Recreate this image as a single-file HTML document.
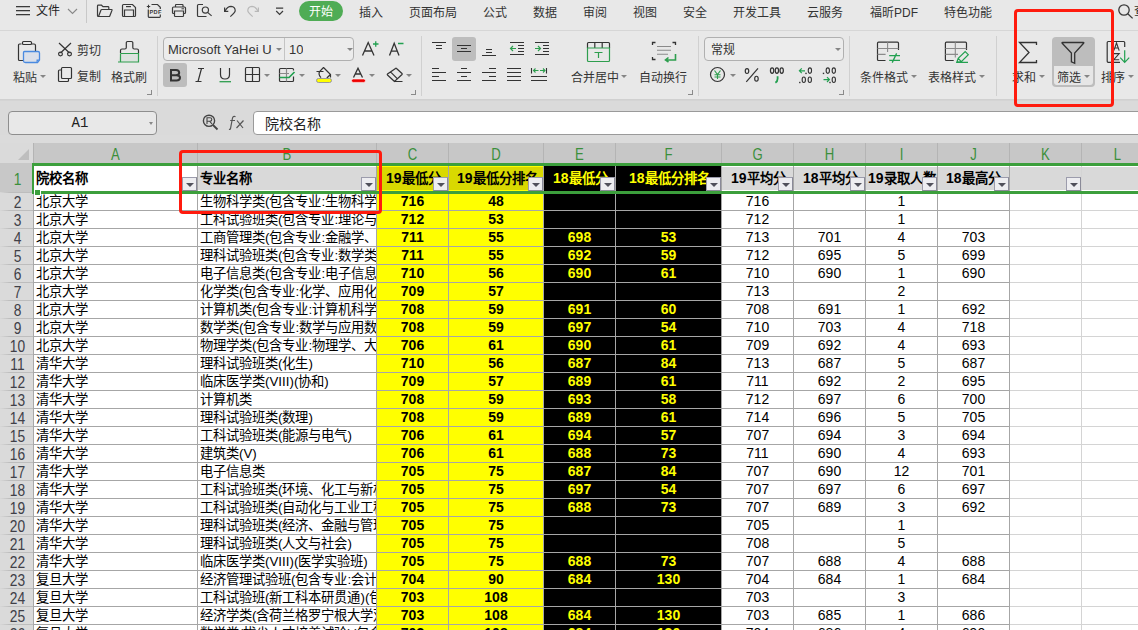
<!DOCTYPE html><html lang="zh-CN"><head><meta charset="utf-8"><style>
*{margin:0;padding:0;box-sizing:border-box}
html,body{width:1138px;height:630px;overflow:hidden;background:#e8e8e8;font-family:"Liberation Sans",sans-serif;color:#222}
.a{position:absolute}
.t{position:absolute;white-space:nowrap;overflow:hidden}
.mt{position:absolute;top:4px;font-size:12px;line-height:16px;color:#333}
.rl{position:absolute;font-size:12px;line-height:14px;color:#333;white-space:nowrap}
.car{position:absolute;width:0;height:0;border-left:3px solid transparent;border-right:3px solid transparent;border-top:3px solid #7a7a7a}
.sep{position:absolute;width:1px;background:#d0d0d0}
.cell{position:absolute;height:18px;font-size:13.33px;line-height:17px;white-space:nowrap;overflow:hidden}
.num{font-size:14px}
.b{font-weight:bold}
.fb{position:absolute;width:15px;height:14px;border:1px solid #9c9cac;border-right-color:#8a8a98;border-bottom-color:#8a8a98;background:#ededf0}
.fb:after{content:"";position:absolute;left:2.5px;top:4.5px;border-left:4px solid transparent;border-right:4px solid transparent;border-top:4.5px solid #50505a}
</style></head><body>
<div class="a" style="left:0;top:0;width:1138px;height:30px;background:#e8e8e8"></div>
<div class="a" style="left:0;top:30px;width:1138px;height:1px;background:#d6d6d6"></div>
<div class="a" style="left:16px;top:6px;width:14px;height:1px;background:#3a3a3a;box-shadow:0 0.5px 0 #888"></div>
<div class="a" style="left:16px;top:10px;width:14px;height:1px;background:#3a3a3a;box-shadow:0 0.5px 0 #888"></div>
<div class="a" style="left:16px;top:14px;width:14px;height:1px;background:#3a3a3a;box-shadow:0 0.5px 0 #888"></div>
<div class="mt" style="left:36px;top:3px;color:#222">文件</div>
<svg class="a" style="left:67px;top:8px" width="11" height="7"><path d="M1 1 L5.5 5.5 L10 1" fill="none" stroke="#888" stroke-width="1.1"/></svg>
<div class="a" style="left:86px;top:0;width:1px;height:23px;background:#c8c8c8"></div>
<svg class="a" style="left:0;top:0" width="300" height="24" fill="none" stroke="#3a3a3a" stroke-width="1.2"><path d="M99.2 16.5 H98.5 Q97.5 16.5 97.5 15.5 V6 Q97.5 5.2 98.3 5.2 H101.5 L103 6.6 H108 Q108.8 6.6 108.8 7.4 V9.5"/><path d="M98.5 16.5 L101 10 Q101.2 9.5 101.8 9.5 H111.5 Q112.2 9.5 112 10.2 L109.8 16 Q109.6 16.5 109 16.5 Z"/><path d="M122.5 5.5 Q122.5 4.5 123.5 4.5 H132.5 L135.5 7.5 V15.5 Q135.5 16.5 134.5 16.5 H123.5 Q122.5 16.5 122.5 15.5 Z"/><path d="M126 6.6 H131"/><path d="M124.5 16.5 V10 H133.5 V16.5"/><path d="M151.5 4.5 H157.5 L160.3 7.3 V9 M160.3 14.5 V16.5 Q160.3 17.3 159.5 17.3 H149 Q148.3 17.3 148.3 16.5 V9.5"/><path d="M146.8 6.5 H150.2 M148.5 4.8 V8.2" stroke-width="1.1"/><text x="149.6" y="14.4" font-family="Liberation Sans" font-weight="bold" font-size="5.6" fill="#3a3a3a" stroke="none" letter-spacing="0.3">PDF</text><path d="M175.5 7 V5.2 Q175.5 4.5 176.2 4.5 H182.3 Q183 4.5 183 5.2 V7"/><path d="M174.5 13.5 H173.5 Q172.5 13.5 172.5 12.5 V8 Q172.5 7 173.5 7 H184.5 Q185.5 7 185.5 8 V12.5 Q185.5 13.5 184.5 13.5 H183.5"/><path d="M174.5 11 H183.5 V15.7 Q183.5 16.5 182.7 16.5 H175.3 Q174.5 16.5 174.5 15.7 Z"/><path d="M181.5 8.8 H184" stroke-width="1"/><path d="M203 4.5 H198.5 Q197.5 4.5 197.5 5.5 V15.5 Q197.5 16.5 198.5 16.5 H206.5"/><circle cx="205.4" cy="10.1" r="3.1"/><path d="M207.6 12.4 L211.6 15.9"/><path d="M224.6 7.5 V11.3 H228.3"/><path d="M225 11 Q227.5 6.3 231 6.3 Q235.2 6.5 235.2 10.8 Q235.2 12.5 230.3 16.6"/><g stroke="#b8b8b8"><path d="M258.4 7.5 V11.3 H254.7"/><path d="M258 11 Q255.5 6.3 252 6.3 Q247.8 6.5 247.8 10.8 Q247.8 12.5 252.7 16.6"/></g><path d="M276 8.2 H283.2 M276.2 11 L279.6 14.4 L283 11" stroke-width="1.2"/></svg>
<div class="a" style="left:299px;top:1px;width:44px;height:20px;border-radius:10px;background:#4fac55"></div>
<div class="mt" style="left:309px;top:4px;color:#fff">开始</div>
<div class="mt" style="left:359px;top:5px">插入</div>
<div class="mt" style="left:409px;top:5px">页面布局</div>
<div class="mt" style="left:483px;top:5px">公式</div>
<div class="mt" style="left:533px;top:5px">数据</div>
<div class="mt" style="left:583px;top:5px">审阅</div>
<div class="mt" style="left:633px;top:5px">视图</div>
<div class="mt" style="left:683px;top:5px">安全</div>
<div class="mt" style="left:733px;top:5px">开发工具</div>
<div class="mt" style="left:807px;top:5px">云服务</div>
<div class="mt" style="left:870px;top:5px">福昕PDF</div>
<div class="mt" style="left:944px;top:5px">特色功能</div>
<svg class="a" style="left:1117px;top:3px" width="18" height="17" fill="none" stroke="#3a3a3a" stroke-width="1.3"><circle cx="7" cy="7" r="5.2"/><path d="M10.8 10.8 L15.6 15.4"/></svg>
<div class="mt" style="left:1134px;top:3px">查</div>
<div class="a" style="left:0;top:31px;width:1138px;height:68px;background:#e8e8e8"></div>
<div class="sep" style="left:157px;top:36px;height:60px"></div>
<div class="sep" style="left:421px;top:36px;height:60px"></div>
<div class="sep" style="left:698px;top:36px;height:60px"></div>
<div class="sep" style="left:849px;top:36px;height:60px"></div>
<div class="sep" style="left:996px;top:36px;height:60px"></div>
<div class="a" style="left:163px;top:37px;width:191px;height:24px;border:1px solid #b0b0b0;border-radius:4px;background:#ececec"></div>
<div class="a" style="left:284px;top:38px;width:1px;height:22px;background:#c4c4c4"></div>
<div class="t" style="left:168px;top:42px;width:105px;font-size:13px;line-height:16px;color:#333">Microsoft YaHei U</div>
<div class="t" style="left:289px;top:42px;font-size:13px;line-height:16px;color:#333">10</div>
<div class="a" style="left:704px;top:37px;width:140px;height:24px;border:1px solid #b0b0b0;border-radius:4px;background:#ececec"></div>
<div class="t" style="left:711px;top:42px;font-size:12px;line-height:16px;color:#333">常规</div>
<div class="a" style="left:163px;top:63px;width:24px;height:24px;border-radius:3px;background:#bdbdbd"></div>
<div class="a" style="left:452px;top:37px;width:24px;height:24px;border-radius:3px;background:#bdbdbd"></div>
<div class="a" style="left:1052px;top:37px;width:43px;height:50px;border-radius:4px;background:#bdbdbd"></div>
<div class="a" style="left:1054px;top:66px;width:39px;height:19px;border-radius:0 0 3px 3px;background:#e6e6e6"></div>
<div class="car" style="left:40px;top:75px;border-left-width:3px;border-right-width:3px;border-top-width:3.5px;border-top-color:#858585"></div>
<div class="car" style="left:276px;top:48px;border-left-width:3px;border-right-width:3px;border-top-width:3.5px;border-top-color:#858585"></div>
<div class="car" style="left:347px;top:48px;border-left-width:3px;border-right-width:3px;border-top-width:3.5px;border-top-color:#858585"></div>
<div class="car" style="left:264px;top:74px;border-left-width:3px;border-right-width:3px;border-top-width:3.5px;border-top-color:#858585"></div>
<div class="car" style="left:299px;top:74px;border-left-width:3px;border-right-width:3px;border-top-width:3.5px;border-top-color:#858585"></div>
<div class="car" style="left:335px;top:74px;border-left-width:3px;border-right-width:3px;border-top-width:3.5px;border-top-color:#858585"></div>
<div class="car" style="left:369px;top:74px;border-left-width:3px;border-right-width:3px;border-top-width:3.5px;border-top-color:#858585"></div>
<div class="car" style="left:406px;top:74px;border-left-width:3px;border-right-width:3px;border-top-width:3.5px;border-top-color:#858585"></div>
<div class="car" style="left:621px;top:75px;border-left-width:3px;border-right-width:3px;border-top-width:3.5px;border-top-color:#858585"></div>
<div class="car" style="left:730px;top:74px;border-left-width:3px;border-right-width:3px;border-top-width:3.5px;border-top-color:#858585"></div>
<div class="car" style="left:835px;top:48px;border-left-width:3px;border-right-width:3px;border-top-width:3.5px;border-top-color:#858585"></div>
<div class="car" style="left:911px;top:75px;border-left-width:3px;border-right-width:3px;border-top-width:3.5px;border-top-color:#858585"></div>
<div class="car" style="left:979px;top:75px;border-left-width:3px;border-right-width:3px;border-top-width:3.5px;border-top-color:#858585"></div>
<div class="car" style="left:1039px;top:75px;border-left-width:3px;border-right-width:3px;border-top-width:3.5px;border-top-color:#858585"></div>
<div class="car" style="left:1084px;top:75px;border-left-width:3px;border-right-width:3px;border-top-width:3.5px;border-top-color:#858585"></div>
<div class="car" style="left:1128px;top:75px;border-left-width:3px;border-right-width:3px;border-top-width:3.5px;border-top-color:#858585"></div>
<div class="a" style="left:147px;top:94px;width:5px;height:1px;background:#8a8a8a"></div><div class="a" style="left:151px;top:90px;width:1px;height:5px;background:#8a8a8a"></div>
<div class="a" style="left:411px;top:94px;width:5px;height:1px;background:#8a8a8a"></div><div class="a" style="left:415px;top:90px;width:1px;height:5px;background:#8a8a8a"></div>
<div class="a" style="left:688px;top:94px;width:5px;height:1px;background:#8a8a8a"></div><div class="a" style="left:692px;top:90px;width:1px;height:5px;background:#8a8a8a"></div>
<div class="a" style="left:839px;top:94px;width:5px;height:1px;background:#8a8a8a"></div><div class="a" style="left:843px;top:90px;width:1px;height:5px;background:#8a8a8a"></div>
<div class="rl" style="left:13px;top:71px;font-size:12px;line-height:14px">粘贴</div>
<div class="rl" style="left:77px;top:44px;font-size:12px;line-height:14px">剪切</div>
<div class="rl" style="left:77px;top:70px;font-size:12px;line-height:14px">复制</div>
<div class="rl" style="left:111px;top:71px;font-size:12px;line-height:14px">格式刷</div>
<div class="rl" style="left:571px;top:71px;font-size:12px;line-height:14px">合并居中</div>
<div class="rl" style="left:639px;top:71px;font-size:12px;line-height:14px">自动换行</div>
<div class="rl" style="left:860px;top:71px;font-size:12px;line-height:14px">条件格式</div>
<div class="rl" style="left:928px;top:71px;font-size:12px;line-height:14px">表格样式</div>
<div class="rl" style="left:1012px;top:71px;font-size:12px;line-height:14px">求和</div>
<div class="rl" style="left:1057px;top:71px;font-size:12px;line-height:14px">筛选</div>
<div class="rl" style="left:1101px;top:71px;font-size:12px;line-height:14px">排序</div>
<svg class="a" style="left:0;top:0" width="1138" height="100"><g fill="none" stroke="#333" stroke-width="1.2"><path d="M21.5 44 H19.5 Q18.5 44 18.5 45 V59.5 Q18.5 60.5 19.5 60.5 H23.5"/><path d="M31.5 44 H34 Q35.5 44 35.5 45.5 V51"/><rect x="22.5" y="41.5" width="9" height="3" rx="1"/><path d="M24.5 51.5 H38 Q39.5 51.5 39.5 53 V60 L37.5 62.5 H25.5 Q23.5 62.5 23.5 61 V52.5 Q23.5 51.5 24.5 51.5 Z" fill="#dbe0ea" stroke="#4a8ae0" stroke-width="1.3"/><path d="M39.5 59.5 L36.5 62.5 V59.5 Z" fill="#4a8ae0" stroke="none"/><path d="M59 43 L69.5 53 M71 43 L60.5 53"/><circle cx="60.5" cy="54" r="1.9"/><circle cx="69.5" cy="54" r="1.9"/><path d="M61.5 70 H59.5 Q58.5 70 58.5 71 V80.5 Q58.5 81.5 59.5 81.5 H67.5 Q68.5 81.5 68.5 80.5 V79"/><rect x="61.5" y="67.5" width="10" height="11" rx="1"/><path d="M120.5 53 V50.5 Q120.5 49 122 49 H124.8 Q126.3 49 126.3 47.5 V42.5 Q126.3 41.5 127.5 41.5 H131.5 Q132.8 41.5 132.8 42.5 V47.5 Q132.8 49 134.3 49 H137 Q138.5 49 138.5 50.5 V53"/><path d="M120.5 53.5 H138.5 V62 H118" fill="#dde3df" stroke="#2e9e4e"/><path d="M120.5 53.5 V62" stroke="#2e9e4e"/><path d="M171 70 H176 Q179.2 70 179.2 72.8 Q179.2 75.2 176 75.2 H171 Z M171 75.2 H176.5 Q180 75.2 180 77.8 Q180 80.5 176.5 80.5 H171 Z" stroke-width="2"/><path d="M198 68.5 H204 M195.5 81.5 H201.5 M201.5 68.5 L198 81.5" stroke-width="1.2"/><path d="M220.5 68 V74.5 Q220.5 79 225 79 Q229.5 79 229.5 74.5 V68"/><path d="M219.5 81.7 H231" stroke="#2e9e4e" stroke-width="1.3"/><rect x="245.5" y="67.5" width="14" height="14" rx="1"/><path d="M252.5 67.5 V81.5 M245.5 74.5 H259.5"/><path d="M293.5 70.5 V69.5 Q293.5 68.5 292.5 68.5 H280.5 Q279.5 68.5 279.5 69.5 V80.5 Q279.5 81.5 280.5 81.5 H292.5 Q293.5 81.5 293.5 80.5 V76.5"/><path d="M286.5 68.5 V81.5 M279.5 73.5 H289" stroke="#8a8a8a"/><path d="M279.5 77.5 H289 L294.5 72" stroke="#22a050" stroke-width="1.7"/><path d="M316.5 71.5 H323.5 M323.5 67.5 L330.5 74.5 V77.5 M330.2 74.8 L326.8 78 M323.5 67.5 L319.8 71.3 Q317.8 74 321 77.6" stroke-width="1.2"/><rect x="316.5" y="78.5" width="15" height="4" rx="2" fill="#ffff00" stroke="#9090a0" stroke-width="0.9"/><path d="M353.5 77.5 L358 68.3 L362.5 77.5 M355.3 74 H360.7" stroke-width="1.3"/><rect x="351.5" y="79" width="14" height="3.4" rx="1.7" fill="#ee0000" stroke="#fff" stroke-width="0.6"/><path d="M394.5 81.5 L387.5 75 Q387 74.5 387.5 74 L395.5 68.5 Q396 68 396.5 68.5 L402 73.5 Q402.5 74 402 74.5 Z M390.5 71.8 L397 78.3 M394.5 81.5 H402.5" stroke-width="1.2"/><path d="M362.5 55.5 L368.2 42.5 L374 55.5 M364.6 51 H372" stroke-width="1.3"/><path d="M389.5 55.5 L394.2 43.3 L399 55.5 M391.3 51.2 H397.3" stroke-width="1.3"/><path d="M373 44 H378.5 M375.75 41.2 V46.8 M398 43.5 H403.5" stroke="#22a050" stroke-width="1.3"/><path d="M432 42.5 H446 M436 45.5 H442 M436 48.5 H442" stroke-width="1.1"/><path d="M457 45.5 H471 M461 48.5 H467 M457 51.5 H471" stroke-width="1.1"/><path d="M486 49.5 H492 M486 52.5 H492 M482 55.5 H496" stroke-width="1.1"/><path d="M510 42.5 H524 M518 45.5 H524 M518 48.5 H524 M518 51.5 H524 M510 54.5 H524" stroke-width="1.1"/><path d="M510.5 48.5 H516 M513 46 L510.5 48.5 L513 51" stroke="#2e9e4e" stroke-width="1.2"/><path d="M535 42.5 H549 M543 45.5 H549 M543 48.5 H549 M543 51.5 H549 M535 54.5 H549" stroke-width="1.1"/><path d="M535 48.5 H540.5 M538 46 L540.5 48.5 L538 51" stroke="#2e9e4e" stroke-width="1.2"/><path d="M432 68.5 H439 M432 72.5 H446 M432 76.5 H439 M432 80.5 H446" stroke-width="1.1"/><path d="M461 68.5 H467 M457 72.5 H471 M461 76.5 H467 M457 80.5 H471" stroke-width="1.1"/><path d="M489 68.5 H496 M482 72.5 H496 M489 76.5 H496 M482 80.5 H496" stroke-width="1.1"/><path d="M507 68.5 H521 M507 72.5 H521 M507 76.5 H521 M507 80.5 H521" stroke-width="1.1"/><path d="M531.5 68 V73.5 M546.5 68 V73.5 M531 76.5 H547 M531 80.5 H547" stroke-width="1.1"/><path d="M533.5 70.5 H538.5 M535.5 68.5 L533.5 70.5 L535.5 72.5 M540 70.5 H545 M543 68.5 L545 70.5 L543 72.5" stroke="#2e9e4e" stroke-width="1.1"/><path d="M587.5 48 V43.5 Q587.5 42.5 588.5 42.5 H608.5 Q609.5 42.5 609.5 43.5 V48 M594.8 42.5 V48 M602.2 42.5 V48"/><path d="M587.5 48 H609.5 V60.5 Q609.5 61.5 608.5 61.5 H588.5 Q587.5 61.5 587.5 60.5 Z M594.5 52.5 H602.5 M598.5 52.5 V58" stroke="#2e9e4e"/><path d="M652.5 45 V42.5 H655.5 M672.5 42.5 H675.5 V45 M652.5 57 V59.5 H655.5" stroke-width="1.3"/><path d="M657 46.5 H671 M657 50.3 H671 M657 54.2 H668" stroke="#8a8a8a" stroke-width="1.1"/><path d="M675.5 54 V60 H666 M668.5 57.5 L665.5 60 L668.5 62" stroke="#2e9e4e" stroke-width="1.6"/><circle cx="717.5" cy="74.5" r="7"/><path d="M714.5 70.5 L717.5 74.5 L720.5 70.5 M717.5 74.5 V79 M714.5 74.8 H720.5 M714.5 77 H720.5" stroke="#2e9e4e" stroke-width="1.1"/></g><g fill="none" stroke="#333" stroke-width="1.2"><ellipse cx="747" cy="71.05" rx="1.75" ry="2.45"/><ellipse cx="756.45" cy="78.7" rx="1.75" ry="2.45"/><path d="M758 68.3 L746.3 81.8"/><ellipse cx="772.1" cy="70.6" rx="1.65" ry="2.75" stroke-width="1.25"/><ellipse cx="776.9" cy="70.6" rx="1.65" ry="2.75" stroke-width="1.25"/><ellipse cx="781.7" cy="70.6" rx="1.65" ry="2.75" stroke-width="1.25"/><ellipse cx="809.9" cy="70.6" rx="1.65" ry="2.75" stroke-width="1.1"/><ellipse cx="803.8" cy="79.7" rx="1.65" ry="2.75" stroke-width="1.1"/><ellipse cx="809.8" cy="79.7" rx="1.65" ry="2.75" stroke-width="1.1"/><ellipse cx="827.8" cy="70.6" rx="1.65" ry="2.75" stroke-width="1.1"/><ellipse cx="833.8" cy="70.6" rx="1.65" ry="2.75" stroke-width="1.1"/><ellipse cx="833.8" cy="79.7" rx="1.65" ry="2.75" stroke-width="1.1"/></g><rect x="805.3" y="72.7" width="1.4" height="1.4" fill="#333"/><rect x="799.0999999999999" y="81.8" width="1.4" height="1.4" fill="#333"/><rect x="822.8" y="72.7" width="1.4" height="1.4" fill="#333"/><rect x="829.3" y="81.8" width="1.4" height="1.4" fill="#333"/><path d="M777.6 76.2 V78.8 Q777.6 81.5 775.4 82.7" fill="none" stroke="#22a050" stroke-width="1.8"/><g fill="none" stroke="#22a050" stroke-width="1.2"><path d="M799.5 70.8 H805 M801.8 68.4 L799.4 70.8 L801.8 73.2"/><path d="M823.5 79.6 H829.3 M827 77.2 L829.4 79.6 L827 82"/></g><g fill="none" stroke="#333" stroke-width="1.2"><path d="M885.5 60.5 H878.5 Q877.5 60.5 877.5 59.5 V43.2 Q877.5 42.2 878.5 42.2 H897.5 Q898.5 42.2 898.5 43.2 V50"/><path d="M877.5 48.5 H898.5 M887.6 42.2 V52 M877.5 54.4 H885.6" stroke="#8a8a8a" stroke-width="1.1"/><path d="M889.2 55.6 H900 M889.2 60.4 H900 M896.6 53.4 L892.2 62.6" stroke="#22a050" stroke-width="1.3"/><path d="M953.7 60.5 H946.4 Q945.4 60.5 945.4 59.5 V43.2 Q945.4 42.2 946.4 42.2 H965.5 Q966.5 42.2 966.5 43.2 V50"/><path d="M945.4 48.5 H966.5 M955.3 42.2 V57.5 M945.4 54.4 H958" stroke="#8a8a8a" stroke-width="1.1"/><path d="M956.8 62.2 L958.2 58.4 L965.2 51.6 L968.3 54.7 L961.3 61.6 Z M958.2 58.4 L961.3 61.6 M956.8 62.3 H968" stroke="#22a050" stroke-width="1.2"/><path d="M1036.5 45 V42.5 H1019.5 L1029 52.5 L1019.5 62.5 H1036.5 V60" stroke-width="1.3"/><path d="M1062.5 42.5 H1083.3 Q1084.3 42.5 1083.6 43.3 L1074.7 53.1 V63.3 L1071.4 61.8 V53.1 L1062.2 43.3 Q1061.6 42.5 1062.5 42.5 Z" stroke-width="1.3"/><path d="M1120 62.3 H1108.2 Q1107.2 62.3 1107.2 61.3 V42.5 Q1107.2 41.5 1108.2 41.5 H1123.7 Q1124.7 41.5 1124.7 42.5 V47" stroke-width="1.2"/><path d="M1113.8 50.6 L1116.5 43 L1119.2 50.6 M1114.7 48 H1118.3 M1113.8 53.6 H1119.2 L1113.8 59.7 H1119.2" stroke-width="1.1"/></g><path d="M1124.7 50.2 V62 M1120.2 57.7 L1124.7 62.3 L1129.2 57.7" fill="none" stroke="#22a050" stroke-width="1.2"/></svg>
<div class="a" style="left:0;top:99px;width:1138px;height:44px;background:#dadada"></div>
<div class="a" style="left:0;top:99px;width:1138px;height:2px;background:linear-gradient(#cecece,#d6d6d6)"></div>
<div class="a" style="left:8px;top:111px;width:149px;height:24px;border:1px solid #8e8e8e;border-radius:4px;background:#e8e8e8"></div>
<div class="t" style="left:60px;top:115px;width:40px;text-align:center;font-family:'Liberation Mono',monospace;font-size:14px;line-height:16px;color:#222">A1</div>
<div class="car" style="left:149px;top:122px;border-left-width:2.5px;border-right-width:2.5px;border-top-width:3.5px;border-top-color:#888"></div>
<svg class="a" style="left:200px;top:112px" width="50" height="22" fill="none" stroke="#444" stroke-width="1.4"><circle cx="9" cy="8.8" r="5.6"/><path d="M13 13 L17.5 17.5" stroke-width="1.8"/><path d="M7 12 V5.8 H10 Q11.8 5.8 11.8 7.6 Q11.8 9.3 10 9.3 H7 M9.8 9.3 L12 12" stroke-width="1.1"/></svg>
<svg class="a" style="left:226px;top:113px" width="24" height="18" fill="none" stroke="#555" stroke-width="1.2"><path d="M9.5 3.8 Q8.5 3 7.5 3.6 Q6.6 4.2 6.3 6 L4.5 15.5 Q4.1 16.8 3 16.3 M4.2 7.5 H9"/><path d="M11 7.5 L17 15 M17.5 7.5 L10.5 15"/></svg>
<div class="a" style="left:253px;top:111px;width:900px;height:24px;border:1px solid #9a9a9a;border-radius:4px 0 0 4px;background:#fff"></div>
<div class="t" style="left:265px;top:116px;font-size:14px;line-height:16px;color:#222">院校名称</div>
<div class="a" style="left:0;top:135px;width:1138px;height:8px;background:#dbdbdb"></div>
<div class="a" style="left:0;top:143px;width:33px;height:20px;background:#dadada"></div>
<svg class="a" style="left:17px;top:148px" width="13" height="13"><path d="M12 1 V12 H1 Z" fill="#bebebe"/></svg>
<div class="a" style="left:33px;top:143px;width:1105px;height:20px;background:#c7c7c7"></div>
<div class="a" style="left:33px;top:143px;width:1px;height:20px;background:#b4b4b4"></div>
<div class="t" style="left:34px;top:146px;width:163px;text-align:center;font-size:16px;line-height:17px;color:#3b8f3b;transform:scaleX(0.82)">A</div>
<div class="a" style="left:197px;top:143px;width:1px;height:20px;background:#b4b4b4"></div>
<div class="t" style="left:198px;top:146px;width:178px;text-align:center;font-size:16px;line-height:17px;color:#3b8f3b;transform:scaleX(0.82)">B</div>
<div class="a" style="left:376px;top:143px;width:1px;height:20px;background:#b4b4b4"></div>
<div class="t" style="left:377px;top:146px;width:71px;text-align:center;font-size:16px;line-height:17px;color:#3b8f3b;transform:scaleX(0.82)">C</div>
<div class="a" style="left:448px;top:143px;width:1px;height:20px;background:#b4b4b4"></div>
<div class="t" style="left:449px;top:146px;width:94px;text-align:center;font-size:16px;line-height:17px;color:#3b8f3b;transform:scaleX(0.82)">D</div>
<div class="a" style="left:543px;top:143px;width:1px;height:20px;background:#b4b4b4"></div>
<div class="t" style="left:544px;top:146px;width:71px;text-align:center;font-size:16px;line-height:17px;color:#3b8f3b;transform:scaleX(0.82)">E</div>
<div class="a" style="left:615px;top:143px;width:1px;height:20px;background:#b4b4b4"></div>
<div class="t" style="left:616px;top:146px;width:105px;text-align:center;font-size:16px;line-height:17px;color:#3b8f3b;transform:scaleX(0.82)">F</div>
<div class="a" style="left:721px;top:143px;width:1px;height:20px;background:#b4b4b4"></div>
<div class="t" style="left:722px;top:146px;width:71px;text-align:center;font-size:16px;line-height:17px;color:#3b8f3b;transform:scaleX(0.82)">G</div>
<div class="a" style="left:793px;top:143px;width:1px;height:20px;background:#b4b4b4"></div>
<div class="t" style="left:794px;top:146px;width:71px;text-align:center;font-size:16px;line-height:17px;color:#3b8f3b;transform:scaleX(0.82)">H</div>
<div class="a" style="left:865px;top:143px;width:1px;height:20px;background:#b4b4b4"></div>
<div class="t" style="left:866px;top:146px;width:71px;text-align:center;font-size:16px;line-height:17px;color:#3b8f3b;transform:scaleX(0.82)">I</div>
<div class="a" style="left:937px;top:143px;width:1px;height:20px;background:#b4b4b4"></div>
<div class="t" style="left:938px;top:146px;width:71px;text-align:center;font-size:16px;line-height:17px;color:#3b8f3b;transform:scaleX(0.82)">J</div>
<div class="a" style="left:1009px;top:143px;width:1px;height:20px;background:#b4b4b4"></div>
<div class="t" style="left:1010px;top:146px;width:71px;text-align:center;font-size:16px;line-height:17px;color:#3b8f3b;transform:scaleX(0.82)">K</div>
<div class="a" style="left:1081px;top:143px;width:1px;height:20px;background:#b4b4b4"></div>
<div class="t" style="left:1082px;top:146px;width:71px;text-align:center;font-size:16px;line-height:17px;color:#3b8f3b;transform:scaleX(0.82)">L</div>
<div class="a" style="left:0;top:163px;width:33px;height:467px;background:#dadada"></div>
<div class="a" style="left:0;top:163px;width:32px;height:29px;background:#c8c8c8"></div>
<div class="t" style="left:0.5px;top:171px;width:33px;text-align:center;font-size:16px;line-height:17px;color:#3b8f3b;transform:scaleX(0.86)">1</div>
<div class="a" style="left:0;top:192px;width:33px;height:1px;background:linear-gradient(90deg,#d8d8d8,#bdbdbd 30%,#bdbdbd)"></div>
<div class="t" style="left:0.5px;top:194px;width:33px;text-align:center;font-size:16px;line-height:17px;color:#404048;transform:scaleX(0.86)">2</div>
<div class="a" style="left:0;top:210px;width:33px;height:1px;background:linear-gradient(90deg,#d8d8d8,#bdbdbd 30%,#bdbdbd)"></div>
<div class="t" style="left:0.5px;top:212px;width:33px;text-align:center;font-size:16px;line-height:17px;color:#404048;transform:scaleX(0.86)">3</div>
<div class="a" style="left:0;top:228px;width:33px;height:1px;background:linear-gradient(90deg,#d8d8d8,#bdbdbd 30%,#bdbdbd)"></div>
<div class="t" style="left:0.5px;top:230px;width:33px;text-align:center;font-size:16px;line-height:17px;color:#404048;transform:scaleX(0.86)">4</div>
<div class="a" style="left:0;top:246px;width:33px;height:1px;background:linear-gradient(90deg,#d8d8d8,#bdbdbd 30%,#bdbdbd)"></div>
<div class="t" style="left:0.5px;top:248px;width:33px;text-align:center;font-size:16px;line-height:17px;color:#404048;transform:scaleX(0.86)">5</div>
<div class="a" style="left:0;top:264px;width:33px;height:1px;background:linear-gradient(90deg,#d8d8d8,#bdbdbd 30%,#bdbdbd)"></div>
<div class="t" style="left:0.5px;top:266px;width:33px;text-align:center;font-size:16px;line-height:17px;color:#404048;transform:scaleX(0.86)">6</div>
<div class="a" style="left:0;top:282px;width:33px;height:1px;background:linear-gradient(90deg,#d8d8d8,#bdbdbd 30%,#bdbdbd)"></div>
<div class="t" style="left:0.5px;top:284px;width:33px;text-align:center;font-size:16px;line-height:17px;color:#404048;transform:scaleX(0.86)">7</div>
<div class="a" style="left:0;top:300px;width:33px;height:1px;background:linear-gradient(90deg,#d8d8d8,#bdbdbd 30%,#bdbdbd)"></div>
<div class="t" style="left:0.5px;top:302px;width:33px;text-align:center;font-size:16px;line-height:17px;color:#404048;transform:scaleX(0.86)">8</div>
<div class="a" style="left:0;top:318px;width:33px;height:1px;background:linear-gradient(90deg,#d8d8d8,#bdbdbd 30%,#bdbdbd)"></div>
<div class="t" style="left:0.5px;top:320px;width:33px;text-align:center;font-size:16px;line-height:17px;color:#404048;transform:scaleX(0.86)">9</div>
<div class="a" style="left:0;top:336px;width:33px;height:1px;background:linear-gradient(90deg,#d8d8d8,#bdbdbd 30%,#bdbdbd)"></div>
<div class="t" style="left:0.5px;top:338px;width:33px;text-align:center;font-size:16px;line-height:17px;color:#404048;transform:scaleX(0.86)">10</div>
<div class="a" style="left:0;top:354px;width:33px;height:1px;background:linear-gradient(90deg,#d8d8d8,#bdbdbd 30%,#bdbdbd)"></div>
<div class="t" style="left:0.5px;top:356px;width:33px;text-align:center;font-size:16px;line-height:17px;color:#404048;transform:scaleX(0.86)">11</div>
<div class="a" style="left:0;top:372px;width:33px;height:1px;background:linear-gradient(90deg,#d8d8d8,#bdbdbd 30%,#bdbdbd)"></div>
<div class="t" style="left:0.5px;top:374px;width:33px;text-align:center;font-size:16px;line-height:17px;color:#404048;transform:scaleX(0.86)">12</div>
<div class="a" style="left:0;top:390px;width:33px;height:1px;background:linear-gradient(90deg,#d8d8d8,#bdbdbd 30%,#bdbdbd)"></div>
<div class="t" style="left:0.5px;top:392px;width:33px;text-align:center;font-size:16px;line-height:17px;color:#404048;transform:scaleX(0.86)">13</div>
<div class="a" style="left:0;top:408px;width:33px;height:1px;background:linear-gradient(90deg,#d8d8d8,#bdbdbd 30%,#bdbdbd)"></div>
<div class="t" style="left:0.5px;top:410px;width:33px;text-align:center;font-size:16px;line-height:17px;color:#404048;transform:scaleX(0.86)">14</div>
<div class="a" style="left:0;top:426px;width:33px;height:1px;background:linear-gradient(90deg,#d8d8d8,#bdbdbd 30%,#bdbdbd)"></div>
<div class="t" style="left:0.5px;top:428px;width:33px;text-align:center;font-size:16px;line-height:17px;color:#404048;transform:scaleX(0.86)">15</div>
<div class="a" style="left:0;top:444px;width:33px;height:1px;background:linear-gradient(90deg,#d8d8d8,#bdbdbd 30%,#bdbdbd)"></div>
<div class="t" style="left:0.5px;top:446px;width:33px;text-align:center;font-size:16px;line-height:17px;color:#404048;transform:scaleX(0.86)">16</div>
<div class="a" style="left:0;top:462px;width:33px;height:1px;background:linear-gradient(90deg,#d8d8d8,#bdbdbd 30%,#bdbdbd)"></div>
<div class="t" style="left:0.5px;top:464px;width:33px;text-align:center;font-size:16px;line-height:17px;color:#404048;transform:scaleX(0.86)">17</div>
<div class="a" style="left:0;top:480px;width:33px;height:1px;background:linear-gradient(90deg,#d8d8d8,#bdbdbd 30%,#bdbdbd)"></div>
<div class="t" style="left:0.5px;top:482px;width:33px;text-align:center;font-size:16px;line-height:17px;color:#404048;transform:scaleX(0.86)">18</div>
<div class="a" style="left:0;top:498px;width:33px;height:1px;background:linear-gradient(90deg,#d8d8d8,#bdbdbd 30%,#bdbdbd)"></div>
<div class="t" style="left:0.5px;top:500px;width:33px;text-align:center;font-size:16px;line-height:17px;color:#404048;transform:scaleX(0.86)">19</div>
<div class="a" style="left:0;top:516px;width:33px;height:1px;background:linear-gradient(90deg,#d8d8d8,#bdbdbd 30%,#bdbdbd)"></div>
<div class="t" style="left:0.5px;top:518px;width:33px;text-align:center;font-size:16px;line-height:17px;color:#404048;transform:scaleX(0.86)">20</div>
<div class="a" style="left:0;top:534px;width:33px;height:1px;background:linear-gradient(90deg,#d8d8d8,#bdbdbd 30%,#bdbdbd)"></div>
<div class="t" style="left:0.5px;top:536px;width:33px;text-align:center;font-size:16px;line-height:17px;color:#404048;transform:scaleX(0.86)">21</div>
<div class="a" style="left:0;top:552px;width:33px;height:1px;background:linear-gradient(90deg,#d8d8d8,#bdbdbd 30%,#bdbdbd)"></div>
<div class="t" style="left:0.5px;top:554px;width:33px;text-align:center;font-size:16px;line-height:17px;color:#404048;transform:scaleX(0.86)">22</div>
<div class="a" style="left:0;top:570px;width:33px;height:1px;background:linear-gradient(90deg,#d8d8d8,#bdbdbd 30%,#bdbdbd)"></div>
<div class="t" style="left:0.5px;top:572px;width:33px;text-align:center;font-size:16px;line-height:17px;color:#404048;transform:scaleX(0.86)">23</div>
<div class="a" style="left:0;top:588px;width:33px;height:1px;background:linear-gradient(90deg,#d8d8d8,#bdbdbd 30%,#bdbdbd)"></div>
<div class="t" style="left:0.5px;top:590px;width:33px;text-align:center;font-size:16px;line-height:17px;color:#404048;transform:scaleX(0.86)">24</div>
<div class="a" style="left:0;top:606px;width:33px;height:1px;background:linear-gradient(90deg,#d8d8d8,#bdbdbd 30%,#bdbdbd)"></div>
<div class="t" style="left:0.5px;top:608px;width:33px;text-align:center;font-size:16px;line-height:17px;color:#404048;transform:scaleX(0.86)">25</div>
<div class="a" style="left:0;top:624px;width:33px;height:1px;background:linear-gradient(90deg,#d8d8d8,#bdbdbd 30%,#bdbdbd)"></div>
<div class="t" style="left:0.5px;top:626px;width:33px;text-align:center;font-size:16px;line-height:17px;color:#404048;transform:scaleX(0.86)">26</div>
<div class="a" style="left:33px;top:163px;width:1px;height:467px;background:#a8a8a8"></div>
<div class="a" style="left:34px;top:163px;width:1104px;height:467px;background:#fff"></div>
<div class="a" style="left:34px;top:163px;width:163px;height:29px;background:#fff"></div>
<div class="a" style="left:198px;top:163px;width:178px;height:29px;background:#fff"></div>
<div class="a" style="left:198px;top:167px;width:178px;height:23px;background:#d9d9d9"></div>
<div class="a" style="left:377px;top:163px;width:71px;height:29px;background:#ffff00"></div>
<div class="a" style="left:377px;top:167px;width:71px;height:23px;background:#d9d900"></div>
<div class="a" style="left:449px;top:163px;width:94px;height:29px;background:#ffff00"></div>
<div class="a" style="left:449px;top:167px;width:94px;height:23px;background:#d9d900"></div>
<div class="a" style="left:544px;top:163px;width:71px;height:29px;background:#000"></div>
<div class="a" style="left:544px;top:167px;width:71px;height:23px;background:#000"></div>
<div class="a" style="left:616px;top:163px;width:105px;height:29px;background:#000"></div>
<div class="a" style="left:616px;top:167px;width:105px;height:23px;background:#000"></div>
<div class="a" style="left:722px;top:163px;width:71px;height:29px;background:#fff"></div>
<div class="a" style="left:722px;top:167px;width:71px;height:23px;background:#d9d9d9"></div>
<div class="a" style="left:794px;top:163px;width:71px;height:29px;background:#fff"></div>
<div class="a" style="left:794px;top:167px;width:71px;height:23px;background:#d9d9d9"></div>
<div class="a" style="left:866px;top:163px;width:71px;height:29px;background:#fff"></div>
<div class="a" style="left:866px;top:167px;width:71px;height:23px;background:#d9d9d9"></div>
<div class="a" style="left:938px;top:163px;width:71px;height:29px;background:#fff"></div>
<div class="a" style="left:938px;top:167px;width:71px;height:23px;background:#d9d9d9"></div>
<div class="a" style="left:1010px;top:163px;width:71px;height:29px;background:#fff"></div>
<div class="a" style="left:1010px;top:167px;width:71px;height:23px;background:#d9d9d9"></div>
<div class="a" style="left:1082px;top:163px;width:71px;height:29px;background:#fff"></div>
<div class="a" style="left:1082px;top:167px;width:71px;height:23px;background:#d9d9d9"></div>
<div class="a" style="left:377px;top:193px;width:71px;height:437px;background:#ffff00"></div>
<div class="a" style="left:449px;top:193px;width:94px;height:437px;background:#ffff00"></div>
<div class="a" style="left:544px;top:193px;width:71px;height:437px;background:#000"></div>
<div class="a" style="left:616px;top:193px;width:105px;height:437px;background:#000"></div>
<div class="a" style="left:34px;top:192px;width:975px;height:1px;background:#a6a6a6"></div>
<div class="a" style="left:1009px;top:192px;width:129px;height:1px;background:#d4d4d4"></div>
<div class="a" style="left:34px;top:210px;width:975px;height:1px;background:#a6a6a6"></div>
<div class="a" style="left:1009px;top:210px;width:129px;height:1px;background:#d4d4d4"></div>
<div class="a" style="left:34px;top:228px;width:975px;height:1px;background:#a6a6a6"></div>
<div class="a" style="left:1009px;top:228px;width:129px;height:1px;background:#d4d4d4"></div>
<div class="a" style="left:34px;top:246px;width:975px;height:1px;background:#a6a6a6"></div>
<div class="a" style="left:1009px;top:246px;width:129px;height:1px;background:#d4d4d4"></div>
<div class="a" style="left:34px;top:264px;width:975px;height:1px;background:#a6a6a6"></div>
<div class="a" style="left:1009px;top:264px;width:129px;height:1px;background:#d4d4d4"></div>
<div class="a" style="left:34px;top:282px;width:975px;height:1px;background:#a6a6a6"></div>
<div class="a" style="left:1009px;top:282px;width:129px;height:1px;background:#d4d4d4"></div>
<div class="a" style="left:34px;top:300px;width:975px;height:1px;background:#a6a6a6"></div>
<div class="a" style="left:1009px;top:300px;width:129px;height:1px;background:#d4d4d4"></div>
<div class="a" style="left:34px;top:318px;width:975px;height:1px;background:#a6a6a6"></div>
<div class="a" style="left:1009px;top:318px;width:129px;height:1px;background:#d4d4d4"></div>
<div class="a" style="left:34px;top:336px;width:975px;height:1px;background:#a6a6a6"></div>
<div class="a" style="left:1009px;top:336px;width:129px;height:1px;background:#d4d4d4"></div>
<div class="a" style="left:34px;top:354px;width:975px;height:1px;background:#a6a6a6"></div>
<div class="a" style="left:1009px;top:354px;width:129px;height:1px;background:#d4d4d4"></div>
<div class="a" style="left:34px;top:372px;width:975px;height:1px;background:#a6a6a6"></div>
<div class="a" style="left:1009px;top:372px;width:129px;height:1px;background:#d4d4d4"></div>
<div class="a" style="left:34px;top:390px;width:975px;height:1px;background:#a6a6a6"></div>
<div class="a" style="left:1009px;top:390px;width:129px;height:1px;background:#d4d4d4"></div>
<div class="a" style="left:34px;top:408px;width:975px;height:1px;background:#a6a6a6"></div>
<div class="a" style="left:1009px;top:408px;width:129px;height:1px;background:#d4d4d4"></div>
<div class="a" style="left:34px;top:426px;width:975px;height:1px;background:#a6a6a6"></div>
<div class="a" style="left:1009px;top:426px;width:129px;height:1px;background:#d4d4d4"></div>
<div class="a" style="left:34px;top:444px;width:975px;height:1px;background:#a6a6a6"></div>
<div class="a" style="left:1009px;top:444px;width:129px;height:1px;background:#d4d4d4"></div>
<div class="a" style="left:34px;top:462px;width:975px;height:1px;background:#a6a6a6"></div>
<div class="a" style="left:1009px;top:462px;width:129px;height:1px;background:#d4d4d4"></div>
<div class="a" style="left:34px;top:480px;width:975px;height:1px;background:#a6a6a6"></div>
<div class="a" style="left:1009px;top:480px;width:129px;height:1px;background:#d4d4d4"></div>
<div class="a" style="left:34px;top:498px;width:975px;height:1px;background:#a6a6a6"></div>
<div class="a" style="left:1009px;top:498px;width:129px;height:1px;background:#d4d4d4"></div>
<div class="a" style="left:34px;top:516px;width:975px;height:1px;background:#a6a6a6"></div>
<div class="a" style="left:1009px;top:516px;width:129px;height:1px;background:#d4d4d4"></div>
<div class="a" style="left:34px;top:534px;width:975px;height:1px;background:#a6a6a6"></div>
<div class="a" style="left:1009px;top:534px;width:129px;height:1px;background:#d4d4d4"></div>
<div class="a" style="left:34px;top:552px;width:975px;height:1px;background:#a6a6a6"></div>
<div class="a" style="left:1009px;top:552px;width:129px;height:1px;background:#d4d4d4"></div>
<div class="a" style="left:34px;top:570px;width:975px;height:1px;background:#a6a6a6"></div>
<div class="a" style="left:1009px;top:570px;width:129px;height:1px;background:#d4d4d4"></div>
<div class="a" style="left:34px;top:588px;width:975px;height:1px;background:#a6a6a6"></div>
<div class="a" style="left:1009px;top:588px;width:129px;height:1px;background:#d4d4d4"></div>
<div class="a" style="left:34px;top:606px;width:975px;height:1px;background:#a6a6a6"></div>
<div class="a" style="left:1009px;top:606px;width:129px;height:1px;background:#d4d4d4"></div>
<div class="a" style="left:34px;top:624px;width:975px;height:1px;background:#a6a6a6"></div>
<div class="a" style="left:1009px;top:624px;width:129px;height:1px;background:#d4d4d4"></div>
<div class="a" style="left:197px;top:163px;width:1px;height:467px;background:#a6a6a6"></div>
<div class="a" style="left:376px;top:163px;width:1px;height:467px;background:#a6a6a6"></div>
<div class="a" style="left:448px;top:163px;width:1px;height:467px;background:#a6a6a6"></div>
<div class="a" style="left:543px;top:163px;width:1px;height:467px;background:#a6a6a6"></div>
<div class="a" style="left:615px;top:163px;width:1px;height:467px;background:#a6a6a6"></div>
<div class="a" style="left:721px;top:163px;width:1px;height:467px;background:#a6a6a6"></div>
<div class="a" style="left:793px;top:163px;width:1px;height:467px;background:#a6a6a6"></div>
<div class="a" style="left:865px;top:163px;width:1px;height:467px;background:#a6a6a6"></div>
<div class="a" style="left:937px;top:163px;width:1px;height:467px;background:#a6a6a6"></div>
<div class="a" style="left:1009px;top:163px;width:1px;height:467px;background:#a6a6a6"></div>
<div class="a" style="left:1081px;top:163px;width:1px;height:467px;background:#d4d4d4"></div>
<div class="t b" style="left:36px;top:170px;width:161px;font-size:13.33px;line-height:17px;color:#000">院校名称</div>
<div class="t b" style="left:200px;top:170px;width:176px;font-size:13.33px;line-height:17px;color:#000">专业名称</div>
<div class="t b" style="left:386px;top:170px;width:62px;font-size:13.33px;line-height:17px;color:#000"><span style="font-size:14px">19</span>最低分</div>
<div class="t b" style="left:457px;top:170px;width:86px;font-size:13.33px;line-height:17px;color:#000"><span style="font-size:14px">19</span>最低分排名</div>
<div class="t b" style="left:553px;top:170px;width:62px;font-size:13.33px;line-height:17px;color:#ffff00"><span style="font-size:14px">18</span>最低分</div>
<div class="t b" style="left:629px;top:170px;width:92px;font-size:13.33px;line-height:17px;color:#ffff00"><span style="font-size:14px">18</span>最低分排名</div>
<div class="t b" style="left:731px;top:170px;width:62px;font-size:13.33px;line-height:17px;color:#000"><span style="font-size:14px">19</span>平均分</div>
<div class="t b" style="left:803px;top:170px;width:62px;font-size:13.33px;line-height:17px;color:#000"><span style="font-size:14px">18</span>平均分</div>
<div class="t b" style="left:868px;top:170px;width:69px;font-size:13.33px;line-height:17px;color:#000"><span style="font-size:14px">19</span>录取人数</div>
<div class="t b" style="left:946px;top:170px;width:63px;font-size:13.33px;line-height:17px;color:#000"><span style="font-size:14px">18</span>最高分</div>
<div class="fb" style="left:182px;top:177px"></div>
<div class="fb" style="left:361px;top:177px"></div>
<div class="fb" style="left:433px;top:177px"></div>
<div class="fb" style="left:528px;top:177px"></div>
<div class="fb" style="left:600px;top:177px"></div>
<div class="fb" style="left:706px;top:177px"></div>
<div class="fb" style="left:778px;top:177px"></div>
<div class="fb" style="left:850px;top:177px"></div>
<div class="fb" style="left:922px;top:177px"></div>
<div class="fb" style="left:994px;top:177px"></div>
<div class="fb" style="left:1066px;top:177px"></div>
<div class="fb" style="left:1138px;top:177px"></div>
<div class="cell" style="left:36px;top:193px;width:160px;color:#000">北京大学</div>
<div class="cell" style="left:200px;top:193px;width:176px;color:#000">生物科学类(包含专业:生物科学类</div>
<div class="cell num b" style="left:377px;top:193px;width:71px;text-align:center;color:#000">716</div>
<div class="cell num b" style="left:449px;top:193px;width:94px;text-align:center;color:#000">48</div>
<div class="cell num" style="left:722px;top:193px;width:71px;text-align:center;color:#000">716</div>
<div class="cell num" style="left:866px;top:193px;width:71px;text-align:center;color:#000">1</div>
<div class="cell" style="left:36px;top:211px;width:160px;color:#000">北京大学</div>
<div class="cell" style="left:200px;top:211px;width:176px;color:#000">工科试验班类(包含专业:理论与应</div>
<div class="cell num b" style="left:377px;top:211px;width:71px;text-align:center;color:#000">712</div>
<div class="cell num b" style="left:449px;top:211px;width:94px;text-align:center;color:#000">53</div>
<div class="cell num" style="left:722px;top:211px;width:71px;text-align:center;color:#000">712</div>
<div class="cell num" style="left:866px;top:211px;width:71px;text-align:center;color:#000">1</div>
<div class="cell" style="left:36px;top:229px;width:160px;color:#000">北京大学</div>
<div class="cell" style="left:200px;top:229px;width:176px;color:#000">工商管理类(包含专业:金融学、</div>
<div class="cell num b" style="left:377px;top:229px;width:71px;text-align:center;color:#000">711</div>
<div class="cell num b" style="left:449px;top:229px;width:94px;text-align:center;color:#000">55</div>
<div class="cell num b" style="left:544px;top:229px;width:71px;text-align:center;color:#ffff00">698</div>
<div class="cell num b" style="left:616px;top:229px;width:105px;text-align:center;color:#ffff00">53</div>
<div class="cell num" style="left:722px;top:229px;width:71px;text-align:center;color:#000">713</div>
<div class="cell num" style="left:794px;top:229px;width:71px;text-align:center;color:#000">701</div>
<div class="cell num" style="left:866px;top:229px;width:71px;text-align:center;color:#000">4</div>
<div class="cell num" style="left:938px;top:229px;width:71px;text-align:center;color:#000">703</div>
<div class="cell" style="left:36px;top:247px;width:160px;color:#000">北京大学</div>
<div class="cell" style="left:200px;top:247px;width:176px;color:#000">理科试验班类(包含专业:数学类</div>
<div class="cell num b" style="left:377px;top:247px;width:71px;text-align:center;color:#000">711</div>
<div class="cell num b" style="left:449px;top:247px;width:94px;text-align:center;color:#000">55</div>
<div class="cell num b" style="left:544px;top:247px;width:71px;text-align:center;color:#ffff00">692</div>
<div class="cell num b" style="left:616px;top:247px;width:105px;text-align:center;color:#ffff00">59</div>
<div class="cell num" style="left:722px;top:247px;width:71px;text-align:center;color:#000">712</div>
<div class="cell num" style="left:794px;top:247px;width:71px;text-align:center;color:#000">695</div>
<div class="cell num" style="left:866px;top:247px;width:71px;text-align:center;color:#000">5</div>
<div class="cell num" style="left:938px;top:247px;width:71px;text-align:center;color:#000">699</div>
<div class="cell" style="left:36px;top:265px;width:160px;color:#000">北京大学</div>
<div class="cell" style="left:200px;top:265px;width:176px;color:#000">电子信息类(包含专业:电子信息</div>
<div class="cell num b" style="left:377px;top:265px;width:71px;text-align:center;color:#000">710</div>
<div class="cell num b" style="left:449px;top:265px;width:94px;text-align:center;color:#000">56</div>
<div class="cell num b" style="left:544px;top:265px;width:71px;text-align:center;color:#ffff00">690</div>
<div class="cell num b" style="left:616px;top:265px;width:105px;text-align:center;color:#ffff00">61</div>
<div class="cell num" style="left:722px;top:265px;width:71px;text-align:center;color:#000">710</div>
<div class="cell num" style="left:794px;top:265px;width:71px;text-align:center;color:#000">690</div>
<div class="cell num" style="left:866px;top:265px;width:71px;text-align:center;color:#000">1</div>
<div class="cell num" style="left:938px;top:265px;width:71px;text-align:center;color:#000">690</div>
<div class="cell" style="left:36px;top:283px;width:160px;color:#000">北京大学</div>
<div class="cell" style="left:200px;top:283px;width:176px;color:#000">化学类(包含专业:化学、应用化</div>
<div class="cell num b" style="left:377px;top:283px;width:71px;text-align:center;color:#000">709</div>
<div class="cell num b" style="left:449px;top:283px;width:94px;text-align:center;color:#000">57</div>
<div class="cell num" style="left:722px;top:283px;width:71px;text-align:center;color:#000">713</div>
<div class="cell num" style="left:866px;top:283px;width:71px;text-align:center;color:#000">2</div>
<div class="cell" style="left:36px;top:301px;width:160px;color:#000">北京大学</div>
<div class="cell" style="left:200px;top:301px;width:176px;color:#000">计算机类(包含专业:计算机科学</div>
<div class="cell num b" style="left:377px;top:301px;width:71px;text-align:center;color:#000">708</div>
<div class="cell num b" style="left:449px;top:301px;width:94px;text-align:center;color:#000">59</div>
<div class="cell num b" style="left:544px;top:301px;width:71px;text-align:center;color:#ffff00">691</div>
<div class="cell num b" style="left:616px;top:301px;width:105px;text-align:center;color:#ffff00">60</div>
<div class="cell num" style="left:722px;top:301px;width:71px;text-align:center;color:#000">708</div>
<div class="cell num" style="left:794px;top:301px;width:71px;text-align:center;color:#000">691</div>
<div class="cell num" style="left:866px;top:301px;width:71px;text-align:center;color:#000">1</div>
<div class="cell num" style="left:938px;top:301px;width:71px;text-align:center;color:#000">692</div>
<div class="cell" style="left:36px;top:319px;width:160px;color:#000">北京大学</div>
<div class="cell" style="left:200px;top:319px;width:176px;color:#000">数学类(包含专业:数学与应用数</div>
<div class="cell num b" style="left:377px;top:319px;width:71px;text-align:center;color:#000">708</div>
<div class="cell num b" style="left:449px;top:319px;width:94px;text-align:center;color:#000">59</div>
<div class="cell num b" style="left:544px;top:319px;width:71px;text-align:center;color:#ffff00">697</div>
<div class="cell num b" style="left:616px;top:319px;width:105px;text-align:center;color:#ffff00">54</div>
<div class="cell num" style="left:722px;top:319px;width:71px;text-align:center;color:#000">710</div>
<div class="cell num" style="left:794px;top:319px;width:71px;text-align:center;color:#000">703</div>
<div class="cell num" style="left:866px;top:319px;width:71px;text-align:center;color:#000">4</div>
<div class="cell num" style="left:938px;top:319px;width:71px;text-align:center;color:#000">718</div>
<div class="cell" style="left:36px;top:337px;width:160px;color:#000">北京大学</div>
<div class="cell" style="left:200px;top:337px;width:176px;color:#000">物理学类(包含专业:物理学、大</div>
<div class="cell num b" style="left:377px;top:337px;width:71px;text-align:center;color:#000">706</div>
<div class="cell num b" style="left:449px;top:337px;width:94px;text-align:center;color:#000">61</div>
<div class="cell num b" style="left:544px;top:337px;width:71px;text-align:center;color:#ffff00">690</div>
<div class="cell num b" style="left:616px;top:337px;width:105px;text-align:center;color:#ffff00">61</div>
<div class="cell num" style="left:722px;top:337px;width:71px;text-align:center;color:#000">709</div>
<div class="cell num" style="left:794px;top:337px;width:71px;text-align:center;color:#000">692</div>
<div class="cell num" style="left:866px;top:337px;width:71px;text-align:center;color:#000">4</div>
<div class="cell num" style="left:938px;top:337px;width:71px;text-align:center;color:#000">693</div>
<div class="cell" style="left:36px;top:355px;width:160px;color:#000">清华大学</div>
<div class="cell" style="left:200px;top:355px;width:176px;color:#000">理科试验班类(化生)</div>
<div class="cell num b" style="left:377px;top:355px;width:71px;text-align:center;color:#000">710</div>
<div class="cell num b" style="left:449px;top:355px;width:94px;text-align:center;color:#000">56</div>
<div class="cell num b" style="left:544px;top:355px;width:71px;text-align:center;color:#ffff00">687</div>
<div class="cell num b" style="left:616px;top:355px;width:105px;text-align:center;color:#ffff00">84</div>
<div class="cell num" style="left:722px;top:355px;width:71px;text-align:center;color:#000">713</div>
<div class="cell num" style="left:794px;top:355px;width:71px;text-align:center;color:#000">687</div>
<div class="cell num" style="left:866px;top:355px;width:71px;text-align:center;color:#000">5</div>
<div class="cell num" style="left:938px;top:355px;width:71px;text-align:center;color:#000">687</div>
<div class="cell" style="left:36px;top:373px;width:160px;color:#000">清华大学</div>
<div class="cell" style="left:200px;top:373px;width:176px;color:#000">临床医学类(VIII)(协和)</div>
<div class="cell num b" style="left:377px;top:373px;width:71px;text-align:center;color:#000">709</div>
<div class="cell num b" style="left:449px;top:373px;width:94px;text-align:center;color:#000">57</div>
<div class="cell num b" style="left:544px;top:373px;width:71px;text-align:center;color:#ffff00">689</div>
<div class="cell num b" style="left:616px;top:373px;width:105px;text-align:center;color:#ffff00">61</div>
<div class="cell num" style="left:722px;top:373px;width:71px;text-align:center;color:#000">711</div>
<div class="cell num" style="left:794px;top:373px;width:71px;text-align:center;color:#000">692</div>
<div class="cell num" style="left:866px;top:373px;width:71px;text-align:center;color:#000">2</div>
<div class="cell num" style="left:938px;top:373px;width:71px;text-align:center;color:#000">695</div>
<div class="cell" style="left:36px;top:391px;width:160px;color:#000">清华大学</div>
<div class="cell" style="left:200px;top:391px;width:176px;color:#000">计算机类</div>
<div class="cell num b" style="left:377px;top:391px;width:71px;text-align:center;color:#000">708</div>
<div class="cell num b" style="left:449px;top:391px;width:94px;text-align:center;color:#000">59</div>
<div class="cell num b" style="left:544px;top:391px;width:71px;text-align:center;color:#ffff00">693</div>
<div class="cell num b" style="left:616px;top:391px;width:105px;text-align:center;color:#ffff00">58</div>
<div class="cell num" style="left:722px;top:391px;width:71px;text-align:center;color:#000">712</div>
<div class="cell num" style="left:794px;top:391px;width:71px;text-align:center;color:#000">697</div>
<div class="cell num" style="left:866px;top:391px;width:71px;text-align:center;color:#000">6</div>
<div class="cell num" style="left:938px;top:391px;width:71px;text-align:center;color:#000">700</div>
<div class="cell" style="left:36px;top:409px;width:160px;color:#000">清华大学</div>
<div class="cell" style="left:200px;top:409px;width:176px;color:#000">理科试验班类(数理)</div>
<div class="cell num b" style="left:377px;top:409px;width:71px;text-align:center;color:#000">708</div>
<div class="cell num b" style="left:449px;top:409px;width:94px;text-align:center;color:#000">59</div>
<div class="cell num b" style="left:544px;top:409px;width:71px;text-align:center;color:#ffff00">689</div>
<div class="cell num b" style="left:616px;top:409px;width:105px;text-align:center;color:#ffff00">61</div>
<div class="cell num" style="left:722px;top:409px;width:71px;text-align:center;color:#000">714</div>
<div class="cell num" style="left:794px;top:409px;width:71px;text-align:center;color:#000">696</div>
<div class="cell num" style="left:866px;top:409px;width:71px;text-align:center;color:#000">5</div>
<div class="cell num" style="left:938px;top:409px;width:71px;text-align:center;color:#000">705</div>
<div class="cell" style="left:36px;top:427px;width:160px;color:#000">清华大学</div>
<div class="cell" style="left:200px;top:427px;width:176px;color:#000">工科试验班类(能源与电气)</div>
<div class="cell num b" style="left:377px;top:427px;width:71px;text-align:center;color:#000">706</div>
<div class="cell num b" style="left:449px;top:427px;width:94px;text-align:center;color:#000">61</div>
<div class="cell num b" style="left:544px;top:427px;width:71px;text-align:center;color:#ffff00">694</div>
<div class="cell num b" style="left:616px;top:427px;width:105px;text-align:center;color:#ffff00">57</div>
<div class="cell num" style="left:722px;top:427px;width:71px;text-align:center;color:#000">707</div>
<div class="cell num" style="left:794px;top:427px;width:71px;text-align:center;color:#000">694</div>
<div class="cell num" style="left:866px;top:427px;width:71px;text-align:center;color:#000">3</div>
<div class="cell num" style="left:938px;top:427px;width:71px;text-align:center;color:#000">694</div>
<div class="cell" style="left:36px;top:445px;width:160px;color:#000">清华大学</div>
<div class="cell" style="left:200px;top:445px;width:176px;color:#000">建筑类(V)</div>
<div class="cell num b" style="left:377px;top:445px;width:71px;text-align:center;color:#000">706</div>
<div class="cell num b" style="left:449px;top:445px;width:94px;text-align:center;color:#000">61</div>
<div class="cell num b" style="left:544px;top:445px;width:71px;text-align:center;color:#ffff00">688</div>
<div class="cell num b" style="left:616px;top:445px;width:105px;text-align:center;color:#ffff00">73</div>
<div class="cell num" style="left:722px;top:445px;width:71px;text-align:center;color:#000">711</div>
<div class="cell num" style="left:794px;top:445px;width:71px;text-align:center;color:#000">690</div>
<div class="cell num" style="left:866px;top:445px;width:71px;text-align:center;color:#000">4</div>
<div class="cell num" style="left:938px;top:445px;width:71px;text-align:center;color:#000">693</div>
<div class="cell" style="left:36px;top:463px;width:160px;color:#000">清华大学</div>
<div class="cell" style="left:200px;top:463px;width:176px;color:#000">电子信息类</div>
<div class="cell num b" style="left:377px;top:463px;width:71px;text-align:center;color:#000">705</div>
<div class="cell num b" style="left:449px;top:463px;width:94px;text-align:center;color:#000">75</div>
<div class="cell num b" style="left:544px;top:463px;width:71px;text-align:center;color:#ffff00">687</div>
<div class="cell num b" style="left:616px;top:463px;width:105px;text-align:center;color:#ffff00">84</div>
<div class="cell num" style="left:722px;top:463px;width:71px;text-align:center;color:#000">707</div>
<div class="cell num" style="left:794px;top:463px;width:71px;text-align:center;color:#000">690</div>
<div class="cell num" style="left:866px;top:463px;width:71px;text-align:center;color:#000">12</div>
<div class="cell num" style="left:938px;top:463px;width:71px;text-align:center;color:#000">701</div>
<div class="cell" style="left:36px;top:481px;width:160px;color:#000">清华大学</div>
<div class="cell" style="left:200px;top:481px;width:176px;color:#000">工科试验班类(环境、化工与新材料</div>
<div class="cell num b" style="left:377px;top:481px;width:71px;text-align:center;color:#000">705</div>
<div class="cell num b" style="left:449px;top:481px;width:94px;text-align:center;color:#000">75</div>
<div class="cell num b" style="left:544px;top:481px;width:71px;text-align:center;color:#ffff00">697</div>
<div class="cell num b" style="left:616px;top:481px;width:105px;text-align:center;color:#ffff00">54</div>
<div class="cell num" style="left:722px;top:481px;width:71px;text-align:center;color:#000">707</div>
<div class="cell num" style="left:794px;top:481px;width:71px;text-align:center;color:#000">697</div>
<div class="cell num" style="left:866px;top:481px;width:71px;text-align:center;color:#000">6</div>
<div class="cell num" style="left:938px;top:481px;width:71px;text-align:center;color:#000">697</div>
<div class="cell" style="left:36px;top:499px;width:160px;color:#000">清华大学</div>
<div class="cell" style="left:200px;top:499px;width:176px;color:#000">工科试验班类(自动化与工业工程</div>
<div class="cell num b" style="left:377px;top:499px;width:71px;text-align:center;color:#000">705</div>
<div class="cell num b" style="left:449px;top:499px;width:94px;text-align:center;color:#000">75</div>
<div class="cell num b" style="left:544px;top:499px;width:71px;text-align:center;color:#ffff00">688</div>
<div class="cell num b" style="left:616px;top:499px;width:105px;text-align:center;color:#ffff00">73</div>
<div class="cell num" style="left:722px;top:499px;width:71px;text-align:center;color:#000">707</div>
<div class="cell num" style="left:794px;top:499px;width:71px;text-align:center;color:#000">689</div>
<div class="cell num" style="left:866px;top:499px;width:71px;text-align:center;color:#000">3</div>
<div class="cell num" style="left:938px;top:499px;width:71px;text-align:center;color:#000">692</div>
<div class="cell" style="left:36px;top:517px;width:160px;color:#000">清华大学</div>
<div class="cell" style="left:200px;top:517px;width:176px;color:#000">理科试验班类(经济、金融与管理</div>
<div class="cell num b" style="left:377px;top:517px;width:71px;text-align:center;color:#000">705</div>
<div class="cell num b" style="left:449px;top:517px;width:94px;text-align:center;color:#000">75</div>
<div class="cell num" style="left:722px;top:517px;width:71px;text-align:center;color:#000">705</div>
<div class="cell num" style="left:866px;top:517px;width:71px;text-align:center;color:#000">1</div>
<div class="cell" style="left:36px;top:535px;width:160px;color:#000">清华大学</div>
<div class="cell" style="left:200px;top:535px;width:176px;color:#000">理科试验班类(人文与社会)</div>
<div class="cell num b" style="left:377px;top:535px;width:71px;text-align:center;color:#000">705</div>
<div class="cell num b" style="left:449px;top:535px;width:94px;text-align:center;color:#000">75</div>
<div class="cell num" style="left:722px;top:535px;width:71px;text-align:center;color:#000">708</div>
<div class="cell num" style="left:866px;top:535px;width:71px;text-align:center;color:#000">5</div>
<div class="cell" style="left:36px;top:553px;width:160px;color:#000">清华大学</div>
<div class="cell" style="left:200px;top:553px;width:176px;color:#000">临床医学类(VIII)(医学实验班)</div>
<div class="cell num b" style="left:377px;top:553px;width:71px;text-align:center;color:#000">705</div>
<div class="cell num b" style="left:449px;top:553px;width:94px;text-align:center;color:#000">75</div>
<div class="cell num b" style="left:544px;top:553px;width:71px;text-align:center;color:#ffff00">688</div>
<div class="cell num b" style="left:616px;top:553px;width:105px;text-align:center;color:#ffff00">73</div>
<div class="cell num" style="left:722px;top:553px;width:71px;text-align:center;color:#000">707</div>
<div class="cell num" style="left:794px;top:553px;width:71px;text-align:center;color:#000">688</div>
<div class="cell num" style="left:866px;top:553px;width:71px;text-align:center;color:#000">4</div>
<div class="cell num" style="left:938px;top:553px;width:71px;text-align:center;color:#000">688</div>
<div class="cell" style="left:36px;top:571px;width:160px;color:#000">复旦大学</div>
<div class="cell" style="left:200px;top:571px;width:176px;color:#000">经济管理试验班(包含专业:会计学</div>
<div class="cell num b" style="left:377px;top:571px;width:71px;text-align:center;color:#000">704</div>
<div class="cell num b" style="left:449px;top:571px;width:94px;text-align:center;color:#000">90</div>
<div class="cell num b" style="left:544px;top:571px;width:71px;text-align:center;color:#ffff00">684</div>
<div class="cell num b" style="left:616px;top:571px;width:105px;text-align:center;color:#ffff00">130</div>
<div class="cell num" style="left:722px;top:571px;width:71px;text-align:center;color:#000">704</div>
<div class="cell num" style="left:794px;top:571px;width:71px;text-align:center;color:#000">684</div>
<div class="cell num" style="left:866px;top:571px;width:71px;text-align:center;color:#000">1</div>
<div class="cell num" style="left:938px;top:571px;width:71px;text-align:center;color:#000">684</div>
<div class="cell" style="left:36px;top:589px;width:160px;color:#000">复旦大学</div>
<div class="cell" style="left:200px;top:589px;width:176px;color:#000">工科试验班(新工科本研贯通)(包含</div>
<div class="cell num b" style="left:377px;top:589px;width:71px;text-align:center;color:#000">703</div>
<div class="cell num b" style="left:449px;top:589px;width:94px;text-align:center;color:#000">108</div>
<div class="cell num" style="left:722px;top:589px;width:71px;text-align:center;color:#000">703</div>
<div class="cell num" style="left:866px;top:589px;width:71px;text-align:center;color:#000">3</div>
<div class="cell" style="left:36px;top:607px;width:160px;color:#000">复旦大学</div>
<div class="cell" style="left:200px;top:607px;width:176px;color:#000">经济学类(含荷兰格罗宁根大学双</div>
<div class="cell num b" style="left:377px;top:607px;width:71px;text-align:center;color:#000">703</div>
<div class="cell num b" style="left:449px;top:607px;width:94px;text-align:center;color:#000">108</div>
<div class="cell num b" style="left:544px;top:607px;width:71px;text-align:center;color:#ffff00">684</div>
<div class="cell num b" style="left:616px;top:607px;width:105px;text-align:center;color:#ffff00">130</div>
<div class="cell num" style="left:722px;top:607px;width:71px;text-align:center;color:#000">703</div>
<div class="cell num" style="left:794px;top:607px;width:71px;text-align:center;color:#000">685</div>
<div class="cell num" style="left:866px;top:607px;width:71px;text-align:center;color:#000">1</div>
<div class="cell num" style="left:938px;top:607px;width:71px;text-align:center;color:#000">686</div>
<div class="cell" style="left:36px;top:625px;width:160px;color:#000">复旦大学</div>
<div class="cell" style="left:200px;top:625px;width:176px;color:#000">数学类(拔尖人才培养试验)(包含</div>
<div class="cell num b" style="left:377px;top:625px;width:71px;text-align:center;color:#000">703</div>
<div class="cell num b" style="left:449px;top:625px;width:94px;text-align:center;color:#000">108</div>
<div class="cell num b" style="left:544px;top:625px;width:71px;text-align:center;color:#ffff00">684</div>
<div class="cell num b" style="left:616px;top:625px;width:105px;text-align:center;color:#ffff00">130</div>
<div class="cell num" style="left:722px;top:625px;width:71px;text-align:center;color:#000">704</div>
<div class="cell num" style="left:794px;top:625px;width:71px;text-align:center;color:#000">686</div>
<div class="cell num" style="left:866px;top:625px;width:71px;text-align:center;color:#000">4</div>
<div class="cell num" style="left:938px;top:625px;width:71px;text-align:center;color:#000">690</div>
<div class="a" style="left:32px;top:163px;width:1106px;height:3px;background:#3c9f3c"></div>
<div class="a" style="left:32px;top:191px;width:1106px;height:3px;background:#3c9f3c"></div>
<div class="a" style="left:32px;top:163px;width:2px;height:31px;background:#3c9f3c"></div>
<div class="a" style="left:35px;top:190px;width:5px;height:5px;background:#3c9f3c;outline:1px solid #fff"></div>
<div class="a" style="left:179px;top:150px;width:203px;height:64px;border:3px solid #ff1b0e;border-radius:4px"></div>
<div class="a" style="left:1014px;top:9px;width:100px;height:98px;border:3px solid #ff1b0e;border-radius:4px"></div>
</body></html>
